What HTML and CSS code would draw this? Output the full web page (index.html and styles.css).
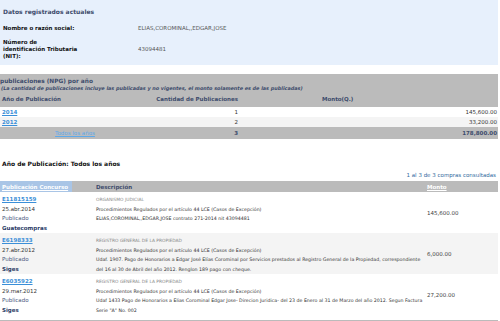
FILE: index.html
```html
<!DOCTYPE html>
<html lang="es">
<head>
<meta charset="utf-8">
<title>Datos registrados</title>
<link rel="stylesheet" href="styles.css">
</head>
<body>
<div class="page">
  <section class="datos">
    <h2 class="datos-title">Datos registrados actuales</h2>
    <div class="kv kv-first">
      <div class="k">Nombre o razón social:</div>
      <div class="v">ELIAS,COROMINAL,,EDGAR,JOSE</div>
    </div>
    <div class="kv kv-second">
      <div class="k">Número de<br>identificación Tributaria<br>(NIT):</div>
      <div class="v">43094481</div>
    </div>
  </section>

  <section class="resumen">
    <div class="res-head">
      <div class="res-title">publicaciones (NPG) por año</div>
      <div class="res-note">(La cantidad de publicaciones incluye las publicadas y no vigentes, el monto solamente es de las publicadas)</div>
    </div>
    <div class="res-row res-colhead">
      <div class="c1">Año de Publicación</div>
      <div class="c2">Cantidad de Publicaciones</div>
      <div class="c3">Monto(Q.)</div>
    </div>
    <div class="res-row res-data">
      <div class="c1"><a class="year" href="#">2014</a></div>
      <div class="c2">1</div>
      <div class="c3">145,600.00</div>
    </div>
    <div class="res-row res-data alt">
      <div class="c1"><a class="year" href="#">2012</a></div>
      <div class="c2">2</div>
      <div class="c3">33,200.00</div>
    </div>
    <div class="res-row res-total">
      <div class="c1"><a class="all" href="#">Todos los años</a></div>
      <div class="c2">3</div>
      <div class="c3">178,800.00</div>
    </div>
  </section>

  <h3 class="sec-title">Año de Publicación: Todos los años</h3>
  <div class="count">1 al 3 de 3 compras consultadas</div>

  <div class="compras">
    <div class="cp-row cp-head">
      <div class="p1"><a class="sort" href="#">Publicación Concurso</a></div>
      <div class="p2">Descripción</div>
      <div class="p3"><a class="sort-plain" href="#">Monto</a></div>
    </div>

    <div class="cp-row cp-item">
      <div class="p1">
        <a class="code" href="#">E11815159</a>
        <div class="date">25.abr.2014</div>
        <div class="status">Publicado</div>
        <div class="src">Guatecompras</div>
      </div>
      <div class="p2">
        <div class="ent">ORGANISMO JUDICIAL</div>
        <div class="desc">Procedimientos Regulados por el artículo 44 LCE (Casos de Excepción)</div>
        <div class="desc">ELIAS,COROMINAL,,EDGAR,JOSE contrato 271-2014 nit 43094481</div>
      </div>
      <div class="p3">145,600.00</div>
    </div>

    <div class="cp-row cp-item alt">
      <div class="p1">
        <a class="code" href="#">E6198333</a>
        <div class="date">27.abr.2012</div>
        <div class="status">Publicado</div>
        <div class="src">Siges</div>
      </div>
      <div class="p2">
        <div class="ent">REGISTRO GENERAL DE LA PROPIEDAD</div>
        <div class="desc">Procedimientos Regulados por el artículo 44 LCE (Casos de Excepción)</div>
        <div class="desc">Udaf. 1907. Pago de Honorarios a Edgar José Elías Corominal por Servicios prestados al Registro General de la Propiedad, correspondiente del 16 al 30 de Abril del año 2012. Renglon 189 pago con cheque.</div>
      </div>
      <div class="p3">6,000.00</div>
    </div>

    <div class="cp-row cp-item last">
      <div class="p1">
        <a class="code" href="#">E6035922</a>
        <div class="date">29.mar.2012</div>
        <div class="status">Publicado</div>
        <div class="src">Siges</div>
      </div>
      <div class="p2">
        <div class="ent">REGISTRO GENERAL DE LA PROPIEDAD</div>
        <div class="desc">Procedimientos Regulados por el artículo 44 LCE (Casos de Excepción)</div>
        <div class="desc">Udaf 1433 Pago de Honorarios a Elias Corominal Edgar Jose- Direcion Juridica- del 23 de Enero al 31 de Marzo del año 2012. Segun Factura Serie "A" No. 002</div>
      </div>
      <div class="p3">27,200.00</div>
    </div>
  </div>
  <div class="foot-bar"></div>
</div>
</body>
</html>
```

FILE: styles.css
```css
html, body {
  margin: 0;
  padding: 0;
  background: #ffffff;
}
body {
  font-family: "DejaVu Sans", Verdana, sans-serif;
  color: #333333;
}
a { text-decoration: underline; }

.page {
  width: 498px;
}

/* ---------- Datos ---------- */
.datos {
  background: #e7f0fc;
  padding: 8px 3px 5.5px;
}
.datos-title {
  margin: 0;
  font-size: 6px;
  line-height: 7px;
  font-weight: bold;
  color: #3d4b6b;
}
.kv {
  display: grid;
  grid-template-columns: 135px 1fr;
  align-items: center;
  font-size: 5.5px;
  line-height: 7px;
}
.kv-first { margin-top: 9.5px; }
.kv-second { margin-top: 7px; }
.k {
  font-weight: bold;
  color: #111111;
}
.v {
  color: #555555;
}

/* ---------- Resumen ---------- */
.resumen {
  margin-top: 9px;
  font-size: 5.5px;
}
.res-head {
  background: #bbbbbb;
  padding-top: 3.5px;
}
.res-title {
  font-weight: bold;
  color: #3d4b6b;
  line-height: 7px;
  font-size: 5.8px;
}
.res-note {
  font-style: italic;
  font-weight: bold;
  color: #3d4b6b;
  font-size: 4.9px;
  line-height: 7px;
  padding-left: 1px;
}
.res-row {
  display: grid;
  grid-template-columns: 148px 90px 1fr;
  align-items: center;
}
.res-row .c1 { padding-left: 2px; }
.res-row .c2 { text-align: right; }
.res-row .c3 { text-align: right; padding-right: 1px; }
.res-colhead {
  background: #bbbbbb;
  height: 15.5px;
  font-weight: bold;
  color: #3d4b6b;
}
.res-colhead .c3 { text-align: left; padding-left: 84px; }
.res-data {
  height: 10px;
  color: #333333;
  background: #ffffff;
}
.res-data.alt { background: #f4f4f4; }
.year {
  color: #3b8fd8;
  font-weight: bold;
}
.res-total {
  height: 12px;
  background: #bbbbbb;
  font-weight: bold;
  color: #3d4b6b;
}
.res-total .c1 { text-align: center; }
.all {
  color: #5ea9ea;
  font-weight: normal;
}

/* ---------- Listado ---------- */
.sec-title {
  margin: 21px 0 0;
  padding-left: 2px;
  font-size: 6px;
  line-height: 8px;
  font-weight: bold;
  color: #111111;
}
.count {
  margin-top: 3.5px;
  text-align: right;
  font-size: 5.5px;
  line-height: 7px;
  color: #2f6a9e;
  padding-right: 2px;
}
.compras {
  margin-top: 2.5px;
}
.cp-row {
  display: grid;
  grid-template-columns: 94px 333px 1fr;
}
.cp-head {
  background: #bbbbbb;
  height: 11px;
  align-items: center;
  font-size: 5.5px;
  font-weight: bold;
}
.cp-head .p1 { height: 100%; }
.sort {
  display: flex;
  align-items: center;
  height: 100%;
  width: 72px;
  box-sizing: border-box;
  padding-left: 2px;
  background: #a9c5e6;
  color: #ffffff;
}
.cp-head .p2 { color: #3d4b6b; padding-left: 2px; }
.sort-plain { color: #ffffff; }
.cp-item {
  padding: 3px 0 0;
  font-size: 5.5px;
  line-height: 9.5px;
}
.cp-item.alt { background: #f4f4f4; }
.cp-item.last { padding-bottom: 5px; }
.cp-item .p1 { padding-left: 2px; }
.cp-item .p2 { padding-left: 2px; padding-right: 4px; }
.cp-item .p3 {
  align-self: center;
  color: #444444;
}
.code {
  display: block;
  color: #3b8fd8;
  font-weight: bold;
}
.date { color: #333333; }
.status { color: #4a5a80; }
.src { color: #2b3b66; font-weight: bold; }
.ent {
  font-size: 4.4px;
  color: #888888;
}
.desc {
  font-size: 4.7px;
  color: #333333;
}

.foot-bar {
  height: 8px;
  background: #bbbbbb;
}
```
